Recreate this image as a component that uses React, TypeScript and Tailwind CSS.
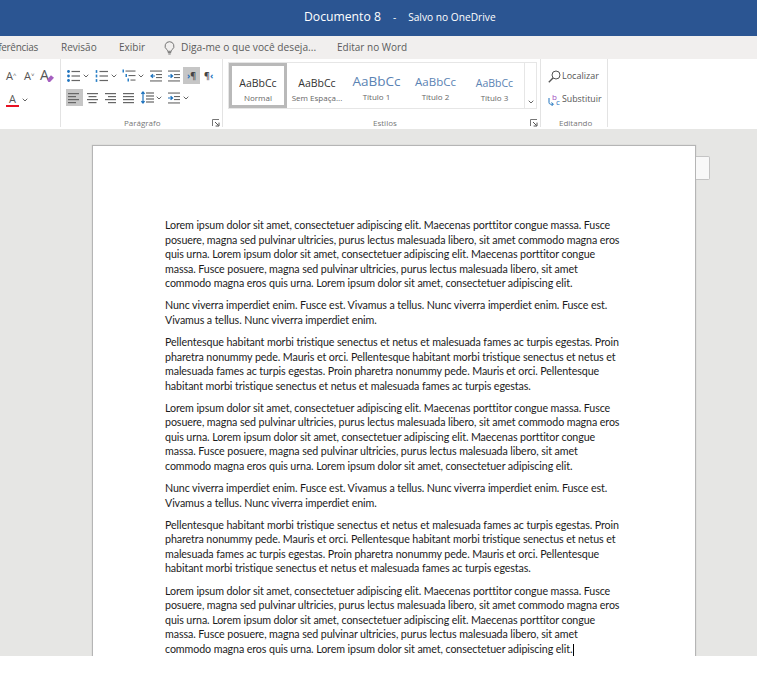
import React from "react";

const A = `Lorem ipsum dolor sit amet, consectetuer adipiscing elit. Maecenas porttitor congue massa. Fusce
posuere, magna sed pulvinar ultricies, purus lectus malesuada libero, sit amet commodo magna eros
quis urna. Lorem ipsum dolor sit amet, consectetuer adipiscing elit. Maecenas porttitor congue
massa. Fusce posuere, magna sed pulvinar ultricies, purus lectus malesuada libero, sit amet
commodo magna eros quis urna. Lorem ipsum dolor sit amet, consectetuer adipiscing elit.`;
const B = `Nunc viverra imperdiet enim. Fusce est. Vivamus a tellus. Nunc viverra imperdiet enim. Fusce est.
Vivamus a tellus. Nunc viverra imperdiet enim.`;
const C = `Pellentesque habitant morbi tristique senectus et netus et malesuada fames ac turpis egestas. Proin
pharetra nonummy pede. Mauris et orci. Pellentesque habitant morbi tristique senectus et netus et
malesuada fames ac turpis egestas. Proin pharetra nonummy pede. Mauris et orci. Pellentesque
habitant morbi tristique senectus et netus et malesuada fames ac turpis egestas.`;

const Para = ({ text, caret }: { text: string; caret?: boolean }) => (
  <p className="mb-[7.8px] whitespace-pre font-['Lato',sans-serif] text-[10.7px] leading-[14.5px] tracking-[-0.1px] text-[#1c1c1c]">
    {text}
    {caret && <span className="ml-px inline-block h-[13px] w-px bg-black align-middle" />}
  </p>
);

const Chev = () => (
  <svg width="6" height="4" viewBox="0 0 6 4" className="shrink-0">
    <path d="M.7.7 3 3l2.3-2.3" fill="none" stroke="#666" strokeWidth="1" />
  </svg>
);

const Lines = ({ x = 0, w = 12, align = "left" }: { x?: number; w?: number; align?: string }) => {
  const rows = [0, 1, 2, 3];
  return (
    <svg width="13" height="12" viewBox="0 0 13 12" className="shrink-0">
      {rows.map((r) => {
        const len = r % 2 ? w - 3 : w;
        const start = align === "center" ? x + (w - len) / 2 : align === "right" ? x + w - len : x;
        const full = align === "justify" ? w : len;
        return <rect key={r} x={start} y={1 + r * 3} width={full} height="1.2" fill="#666" />;
      })}
    </svg>
  );
};

const Bullets = () => (
  <svg width="13" height="12" viewBox="0 0 13 12">
    {[1.5, 6, 10.5].map((y) => (
      <g key={y}>
        <circle cx="1.5" cy={y} r="1.4" fill="#1e73be" />
        <rect x="4.5" y={y - 0.6} width="8.5" height="1.2" fill="#666" />
      </g>
    ))}
  </svg>
);

const Numbers = () => (
  <svg width="13" height="12" viewBox="0 0 13 12">
    {[1.5, 6, 10.5].map((y) => (
      <g key={y}>
        <rect x="0.7" y={y - 1.4} width="1.6" height="2.8" fill="#2a80c8" />
        <rect x="4.5" y={y - 0.6} width="8.5" height="1.2" fill="#666" />
      </g>
    ))}
  </svg>
);

const Multi = () => (
  <svg width="14" height="13" viewBox="0 0 14 13">
    <rect x="0.5" y="0.5" width="1.5" height="3" fill="#2a80c8" />
    <rect x="3.5" y="5" width="1.5" height="3" fill="#2a80c8" />
    <rect x="5.5" y="9.5" width="1.5" height="3" fill="#2a80c8" />
    <rect x="3.5" y="1.5" width="10" height="1.1" fill="#666" />
    <rect x="6.5" y="6" width="7" height="1.1" fill="#666" />
    <rect x="8.5" y="10.5" width="5" height="1.1" fill="#666" />
  </svg>
);

const Indent = ({ dir }: { dir: "in" | "out" }) => (
  <svg width="12" height="12" viewBox="0 0 12 12">
    <rect x="0" y="0.5" width="12" height="1.1" fill="#666" />
    <rect x="6" y="4" width="6" height="1.1" fill="#666" />
    <rect x="6" y="7" width="6" height="1.1" fill="#666" />
    <rect x="0" y="10.4" width="12" height="1.1" fill="#666" />
    <path
      d={dir === "in" ? "M0 6h4M2.6 4.2 4.6 6 2.6 7.8" : "M5 6H1M3 4.2 1 6l2 1.8"}
      fill="none"
      stroke="#1e73be"
      strokeWidth="1.2"
    />
  </svg>
);

const LineSpacing = () => (
  <svg width="13" height="13" viewBox="0 0 13 13">
    <path d="M2 1v11M.4 2.8 2 1l1.6 1.8M.4 10.2 2 12l1.6-1.8" fill="none" stroke="#1e73be" strokeWidth="1.2" />
    {[2, 5, 8, 11].map((y) => (
      <rect key={y} x="5" y={y - 0.6} width="8" height="1.2" fill="#666" />
    ))}
  </svg>
);

const Launcher = () => (
  <svg width="8" height="8" viewBox="0 0 8 8" className="shrink-0">
    <path d="M.5 7V.5H7" fill="none" stroke="#777" />
    <path d="M3 3l3.6 3.6M7 3.6V7H3.6" fill="none" stroke="#555" />
  </svg>
);

const GroupLabel = ({ children, pad }: { children: string; pad: string }) => (
  <span className={`block flex-1 text-[8px] leading-[12px] text-[#777] ${pad}`}>{children}</span>
);

const Style = ({
  sample,
  name,
  cls,
  w,
}: {
  sample: string;
  name: string;
  cls: string;
  w: string;
}) => (
  <div className={`flex shrink-0 flex-col items-center ${w}`}>
    <span className={`flex h-[20px] items-center leading-none ${cls}`}>{sample}</span>
    <span className="mt-[-1px] whitespace-nowrap text-[8px] leading-[12px] text-[#666]">{name}</span>
  </div>
);

export default function App() {
  return (
    <div className="h-[673px] w-[757px] overflow-hidden bg-white font-['Open_Sans',sans-serif]">
      <header className="flex h-[36px] items-center bg-[#2b5592] pb-[1px] pl-[304px] text-white">
        <span className="text-[12.2px]">Documento 8</span>
        <span className="ml-[12px] text-[10px]">-</span>
        <span className="ml-[12px] text-[10.2px]">Salvo no OneDrive</span>
      </header>

      <nav className="flex h-[23px] items-center overflow-hidden bg-[#f1efee] text-[10px] text-[#5c5c5c]">
        <span className="ml-[-13px] w-[74px] shrink-0 whitespace-nowrap tracking-[-0.3px]">Referências</span>
        <span className="w-[58px]">Revisão</span>
        <span className="w-[45px]">Exibir</span>
        <svg width="11" height="14" viewBox="0 0 11 14" className="shrink-0">
          <path
            d="M5.5.7a4.4 4.4 0 0 0-2.7 7.9c.6.5.8 1 .8 1.7h3.8c0-.7.2-1.2.8-1.7A4.4 4.4 0 0 0 5.5.7ZM3.8 11.6h3.4M4.3 13h2.4"
            fill="none"
            stroke="#666"
            strokeWidth="0.9"
          />
        </svg>
        <span className="ml-[6px] w-[156px] whitespace-nowrap text-[10.2px]">Diga-me o que você deseja...</span>
        <span className="whitespace-nowrap">Editar no Word</span>
      </nav>

      <section className="flex h-[70px] bg-white">
        {/* Fonte */}
        <div className="flex h-[68px] w-[61px] shrink-0 flex-col gap-[9px] border-r border-[#e3e3e3] pl-[6px] pt-[9px] text-[#555]">
          <div className="flex h-[14px] items-center">
            <span className="w-[18px] text-[11px] leading-none">A<sup className="text-[6px]">^</sup></span>
            <span className="w-[16px] text-[11px] leading-none">A<sup className="text-[6px]">˅</sup></span>
            <span className="relative text-[14px] leading-none">
              A
              <svg width="9" height="9" viewBox="0 0 9 9" className="absolute left-[6px] top-[6px]">
                <path d="M1 5.5 5 1.2l3 2.5-4 4.2H2.4Z" fill="#a55fc0" />
              </svg>
            </span>
          </div>
          <div className="flex items-center gap-[3px] pt-[1px]">
            <span className="w-[13px] border-b-[2px] border-[#e81123] text-center text-[11px] leading-[13px] text-[#555]">A</span>
            <Chev />
          </div>
        </div>

        {/* Parágrafo */}
        <div className="flex h-[68px] w-[162px] shrink-0 flex-col border-r border-[#e3e3e3] pl-[5px] pt-[8px]">
          <div className="flex h-[18px] items-center">
            <span className="ml-[1px] flex w-[28px] items-center gap-[3px]"><Bullets /><Chev /></span>
            <span className="flex w-[27px] items-center gap-[3px]"><Numbers /><Chev /></span>
            <span className="flex w-[28px] items-center gap-[2px]"><Multi /><Chev /></span>
            <span className="flex w-[18px]"><Indent dir="out" /></span>
            <span className="flex w-[16px]"><Indent dir="in" /></span>
            <span className="ml-[-1px] flex h-[17px] w-[17px] items-center justify-center bg-[#c6c6c6] text-[9px] font-semibold leading-none text-[#444]">
              <span className="font-bold text-[#1e73be]">›</span>¶
            </span>
            <span className="ml-[4px] text-[9px] font-semibold leading-none text-[#444]">
              ¶<span className="font-bold text-[#1e73be]">‹</span>
            </span>
          </div>
          <div className="mt-[5px] flex h-[17px] items-center">
            <span className="flex h-[17px] w-[17px] items-center justify-center bg-[#c6c6c6]"><Lines w={11} /></span>
            <span className="ml-[4px] flex w-[18px]"><Lines w={11} align="center" /></span>
            <span className="flex w-[18px]"><Lines w={11} align="right" /></span>
            <span className="flex w-[18px]"><Lines w={11} align="justify" /></span>
            <span className="flex w-[27px] items-center gap-[2px]"><LineSpacing /><Chev /></span>
            <span className="flex items-center gap-[3px]"><Indent dir="in" /><Chev /></span>
          </div>
          <div className="mt-[11px] flex items-center pr-[2px]">
            <GroupLabel pad="pl-[58px]">Parágrafo</GroupLabel>
            <Launcher />
          </div>
        </div>

        {/* Estilos */}
        <div className="flex h-[68px] w-[318px] shrink-0 flex-col border-r border-[#e3e3e3] pl-[5px] pt-[3px]">
          <div className="flex h-[47px] w-[309px] border border-[#e6e6e6]">
            <div className="flex flex-1 overflow-hidden">
              <div className="flex h-[45px] w-[58px] shrink-0 flex-col items-center border-[3px] border-[#b9b9b9] pt-[7px]">
                <Style sample="AaBbCc" name="Normal" cls="text-[10.5px] text-[#333]" w="w-full" />
              </div>
              <div className="pt-[10px]">
                <Style sample="AaBbCc" name="Sem Espaça..." cls="text-[10.5px] text-[#333]" w="w-[60px]" />
              </div>
              <div className="pt-[9px]">
                <Style sample="AaBbCc" name="Título 1" cls="text-[13.5px] text-[#5b83b3]" w="w-[59px]" />
              </div>
              <div className="pt-[9px]">
                <Style sample="AaBbCc" name="Título 2" cls="text-[11.5px] text-[#5b83b3]" w="w-[59px]" />
              </div>
              <div className="pt-[10px]">
                <Style sample="AaBbCc" name="Título 3" cls="text-[10.5px] text-[#5b83b3]" w="w-[59px]" />
              </div>
            </div>
            <div className="flex w-[12px] shrink-0 items-end justify-center border-l border-[#e6e6e6] pb-[4px]">
              <Chev />
            </div>
          </div>
          <div className="mt-[8px] flex items-center pr-[2px]">
            <GroupLabel pad="pl-[145px]">Estilos</GroupLabel>
            <Launcher />
          </div>
        </div>

        {/* Editando */}
        <div className="flex h-[68px] w-[67px] shrink-0 flex-col border-r border-[#e3e3e3] pl-[7px] pt-[9px]">
          <div className="flex h-[16px] shrink-0 items-center gap-[1px]">
            <svg width="13" height="13" viewBox="0 0 13 13" className="shrink-0">
              <circle cx="8" cy="5" r="4" fill="none" stroke="#555" strokeWidth="1" />
              <path d="M5 8 .8 12.2" stroke="#555" strokeWidth="1.4" />
            </svg>
            <span className="text-[9px] leading-[12px] text-[#555]">Localizar</span>
          </div>
          <div className="mt-[7px] flex h-[16px] shrink-0 items-center gap-[1px]">
            <svg width="13" height="15" viewBox="0 0 13 15" className="shrink-0">
              <path d="M1 6v4.5c0 1 .8 1.7 1.7 1.7H5M3.6 10.4 5.4 12.2 3.6 14" fill="none" stroke="#1e73be" strokeWidth="1" />
              <text x="4" y="7.5" fontSize="8" fill="#a14fc0" fontFamily="Open Sans">b</text>
              <text x="8" y="13" fontSize="8" fill="#1e73be" fontFamily="Open Sans">c</text>
            </svg>
            <span className="text-[8.8px] leading-[12px] text-[#555]">Substituir</span>
          </div>
          <div className="mt-[10px] flex shrink-0">
            <GroupLabel pad="pl-[11px]">Editando</GroupLabel>
          </div>
        </div>
      </section>

      <main className="flex h-[527px] items-start overflow-hidden bg-[#e6e6e4] pl-[92px] pt-[16px]">
        <article className="w-[604px] shrink-0 border border-b-0 border-[#b5b5b5] bg-white pb-[40px] pl-[72px] pt-[72px] shadow-[0_0_1px_#bbb]">
          <Para text={A} />
          <Para text={B} />
          <Para text={C} />
          <Para text={A} />
          <Para text={B} />
          <Para text={C} />
          <Para text={A} caret />
        </article>
        <div className="mt-[11px] h-[24px] w-[14px] shrink-0 rounded-r-[2px] border border-l-0 border-[#c4c4c4] bg-[#f8f8f8]" />
      </main>
    </div>
  );
}
